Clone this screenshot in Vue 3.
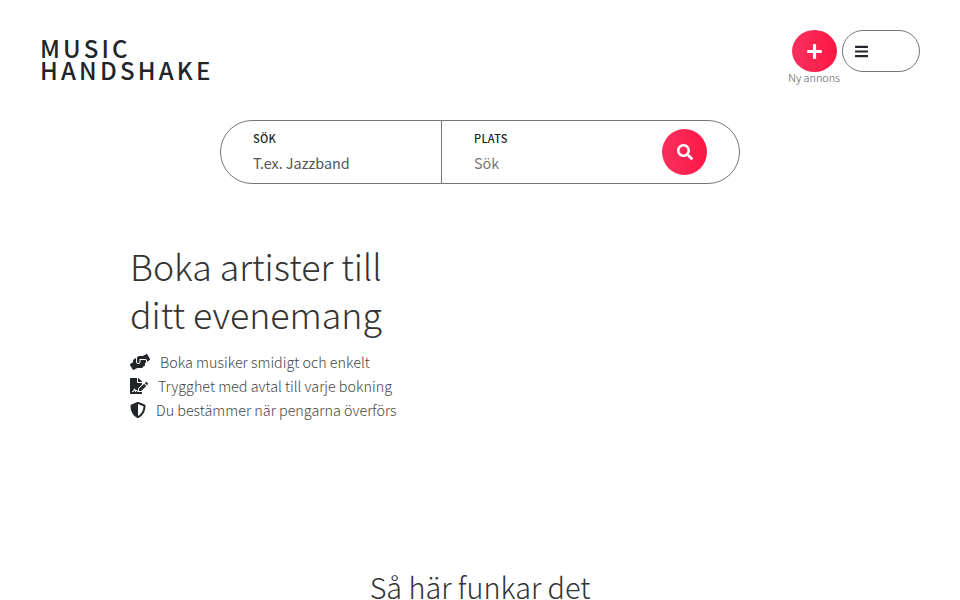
<script setup>
const points = [
  {
    text: 'Boka musiker smidigt och enkelt',
    box: '0 0 640 512',
    d: 'M488 192H336v56c0 39.7-32.3 72-72 72s-72-32.3-72-72V126.4l-64.9 39C107.8 176.9 96 197.8 96 220.2v47.3l-80 46.2C.7 322.5-4.6 342.1 4.3 357.4l80 138.6c8.8 15.3 28.4 20.5 43.7 11.7L231.4 448H368c35.3 0 64-28.7 64-64h16c17.7 0 32-14.3 32-32v-64h8c13.3 0 24-10.7 24-24v-48c0-13.3-10.7-24-24-24zm147.7-37.4L555.7 16C546.9.7 527.3-4.5 512 4.3L408.6 64H306.4c-12 0-23.7 3.4-33.9 9.7L239 94.6c-9.4 5.8-15 16.1-15 27.1V248c0 22.1 17.9 40 40 40s40-17.9 40-40v-88h184c30.9 0 56 25.1 56 56v28.5l80-46.2c15.3-8.9 20.5-28.4 11.7-43.7z',
    w: 20
  },
  {
    text: 'Trygghet med avtal till varje bokning',
    box: '0 0 576 512',
    d: 'M218.17 424.14c-2.95-5.92-8.09-6.52-10.17-6.52s-7.22.59-10.02 6.19l-7.67 15.34c-6.37 12.78-25.03 11.37-29.48-2.09L144 386.59l-10.61 31.88c-5.89 17.66-22.38 29.53-41 29.53H80c-8.84 0-16-7.16-16-16s7.16-16 16-16h12.39c4.83 0 9.11-3.08 10.64-7.66l18.19-54.64c3.3-9.81 12.44-16.41 22.78-16.41s19.48 6.59 22.77 16.41l13.88 41.64c19.75-16.19 54.06-9.7 66 14.16 1.89 3.78 5.49 5.95 9.36 6.26v-82.12l128-127.09V160H248c-13.2 0-24-10.8-24-24V0H24C10.7 0 0 10.7 0 24v464c0 13.3 10.7 24 24 24h336c13.3 0 24-10.7 24-24v-40l-128-.11c-16.12-.31-30.58-9.28-37.83-23.75zM384 121.9c0-6.3-2.5-12.4-7-16.9L279.1 7c-4.5-4.5-10.6-7-17-7H256v128h128v-6.1zm-96 225.06V416h68.99l161.68-162.78-67.88-67.88L288 346.96zm280.54-179.63l-31.87-31.87c-9.94-9.94-26.07-9.94-36.01 0l-27.25 27.25 67.88 67.88 27.25-27.25c9.95-9.94 9.95-26.07 0-36.01z',
    w: 18
  },
  {
    text: 'Du bestämmer när pengarna överförs',
    box: '0 0 512 512',
    d: 'M466.5 83.7l-192-80a48.15 48.15 0 0 0-36.9 0l-192 80C27.7 91.1 16 108.6 16 128c0 198.5 114.5 335.7 221.5 380.3 11.8 4.9 25.1 4.9 36.9 0C360.1 472.6 496 349.3 496 128c0-19.4-11.7-36.9-29.5-44.3zM256.1 446.3l-.1-381 175.9 73.3c-3.3 151.4-82.1 261.1-175.8 307.7z',
    w: 16
  }
]
</script>

<template>
  <div class="page">
    <header class="top">
      <a class="logo" href="#">MUSIC<br>HANDSHAKE</a>
      <div class="actions">
        <div class="new-ad">
          <button class="round plus" type="button">
            <svg viewBox="0 0 448 512" width="15" height="17">
              <path fill="currentColor" d="M416 208H272V64c0-17.67-14.33-32-32-32h-32c-17.67 0-32 14.33-32 32v144H32c-17.67 0-32 14.33-32 32v32c0 17.67 14.33 32 32 32h144v144c0 17.67 14.33 32 32 32h32c17.67 0 32-14.33 32-32V304h144c17.67 0 32-14.33 32-32v-32c0-17.67-14.33-32-32-32z"/>
            </svg>
          </button>
          <span class="new-label">Ny annons</span>
        </div>
        <button class="menu" type="button">
          <svg viewBox="0 0 448 512" width="13" height="15">
            <path fill="currentColor" d="M16 132h416c8.837 0 16-7.163 16-16V76c0-8.837-7.163-16-16-16H16C7.163 60 0 67.163 0 76v40c0 8.837 7.163 16 16 16zm0 160h416c8.837 0 16-7.163 16-16v-40c0-8.837-7.163-16-16-16H16c-8.837 0-16 7.163-16 16v40c0 8.837 7.163 16 16 16zm0 160h416c8.837 0 16-7.163 16-16v-40c0-8.837-7.163-16-16-16H16c-8.837 0-16 7.163-16 16v40c0 8.837 7.163 16 16 16z"/>
          </svg>
        </button>
      </div>
    </header>

    <form class="search" @submit.prevent>
      <label class="field first">
        <span class="field-label">SÖK</span>
        <input class="field-input dark" type="text" placeholder="T.ex. Jazzband">
      </label>
      <label class="field second">
        <span class="field-label">PLATS</span>
        <input class="field-input" type="text" placeholder="Sök">
      </label>
      <button class="round go" type="submit">
        <svg viewBox="0 0 512 512" width="16" height="16">
          <path fill="currentColor" d="M505 442.7L405.3 343c-4.5-4.5-10.6-7-17-7H372c27.6-35.3 44-79.7 44-128C416 93.1 322.9 0 208 0S0 93.1 0 208s93.1 208 208 208c48.3 0 92.7-16.4 128-44v16.3c0 6.4 2.5 12.5 7 17l99.7 99.7c9.4 9.4 24.6 9.4 33.9 0l28.3-28.3c9.4-9.4 9.4-24.6.1-34zM208 336c-70.7 0-128-57.2-128-128 0-70.7 57.2-128 128-128 70.7 0 128 57.2 128 128 0 70.7-57.2 128-128 128z"/>
        </svg>
      </button>
    </form>

    <section class="hero">
      <h1>Boka artister till<br>ditt evenemang</h1>
      <ul class="points">
        <li v-for="p in points" :key="p.text">
          <svg :viewBox="p.box" :width="p.w" height="16">
            <path fill="currentColor" :d="p.d"/>
          </svg>
          <span>{{ p.text }}</span>
        </li>
      </ul>
    </section>

    <h2 class="how">Så här funkar det</h2>
  </div>
</template>

<style scoped>
.page {
  font-family: "Noto Sans CJK SC", "Noto Sans", sans-serif;
  color: #212529;
  background: #fff;
  height: 600px;
  overflow: hidden;
}

.top {
  display: flex;
  justify-content: space-between;
  align-items: flex-start;
  padding: 30px 40px 0;
  height: 90px;
  box-sizing: border-box;
}

.logo {
  margin-top: 7px;
  font-size: 24px;
  line-height: 22px;
  font-weight: 500;
  letter-spacing: 3.2px;
  color: #212529;
  text-decoration: none;
}

.actions {
  display: flex;
  align-items: flex-start;
  gap: 2px;
}

.new-ad {
  display: flex;
  flex-direction: column;
  align-items: center;
}

.round {
  display: flex;
  align-items: center;
  justify-content: center;
  padding: 0;
  border: 0;
  border-radius: 50%;
  color: #fff;
  background: linear-gradient(to right, #f7305f, #ff1744);
}

.plus {
  width: 45px;
  height: 42px;
}

.new-label {
  margin-top: -1px;
  font-size: 10.8px;
  line-height: 12px;
  font-weight: 300;
  color: #555;
  white-space: nowrap;
}

.menu {
  display: flex;
  align-items: center;
  width: 78px;
  height: 42px;
  padding: 0 0 0 12px;
  background: #fff;
  border: 1px solid #777;
  border-radius: 21px;
  color: #212529;
}

.search {
  display: flex;
  align-items: center;
  width: 520px;
  height: 64px;
  margin: 30px auto 0;
  box-sizing: border-box;
  border: 1px solid #777;
  border-radius: 32px;
}

.field {
  display: flex;
  flex-direction: column;
  height: 100%;
  box-sizing: border-box;
  padding-top: 10px;
}

.first {
  width: 221px;
  padding-left: 32px;
  border-right: 1px solid #777;
}

.second {
  width: 220px;
  padding-left: 32px;
}

.field-label {
  font-size: 11px;
  line-height: 15px;
  font-weight: 500;
  letter-spacing: 0.3px;
  color: #212529;
}

.field-input {
  width: 170px;
  margin-top: 5px;
  padding: 0;
  border: 0;
  outline: 0;
  background: transparent;
  font-family: inherit;
  font-size: 14.4px;
  line-height: 24px;
  font-weight: 400;
}

.field-input::placeholder {
  color: #777;
  opacity: 1;
}

.field-input.dark::placeholder {
  color: #555;
}

.go {
  width: 45px;
  height: 46px;
}

.hero {
  margin: 58px 0 0 130px;
}

h1 {
  margin: 0;
  font-size: 35.7px;
  line-height: 48px;
  font-weight: 300;
  color: #333;
}

.points {
  list-style: none;
  margin: 11px 0 0;
  padding: 0;
}

.points li {
  display: flex;
  align-items: center;
  gap: 10px;
  height: 24px;
  font-size: 14.35px;
  font-weight: 300;
  color: #444;
}

.points svg {
  margin-top: 2px;
  color: #212529;
}

.how {
  margin: 147px 0 0;
  text-align: center;
  font-size: 28.8px;
  line-height: 38px;
  font-weight: 300;
  color: #333;
}
</style>

<style>
body {
  margin: 0;
}
</style>
